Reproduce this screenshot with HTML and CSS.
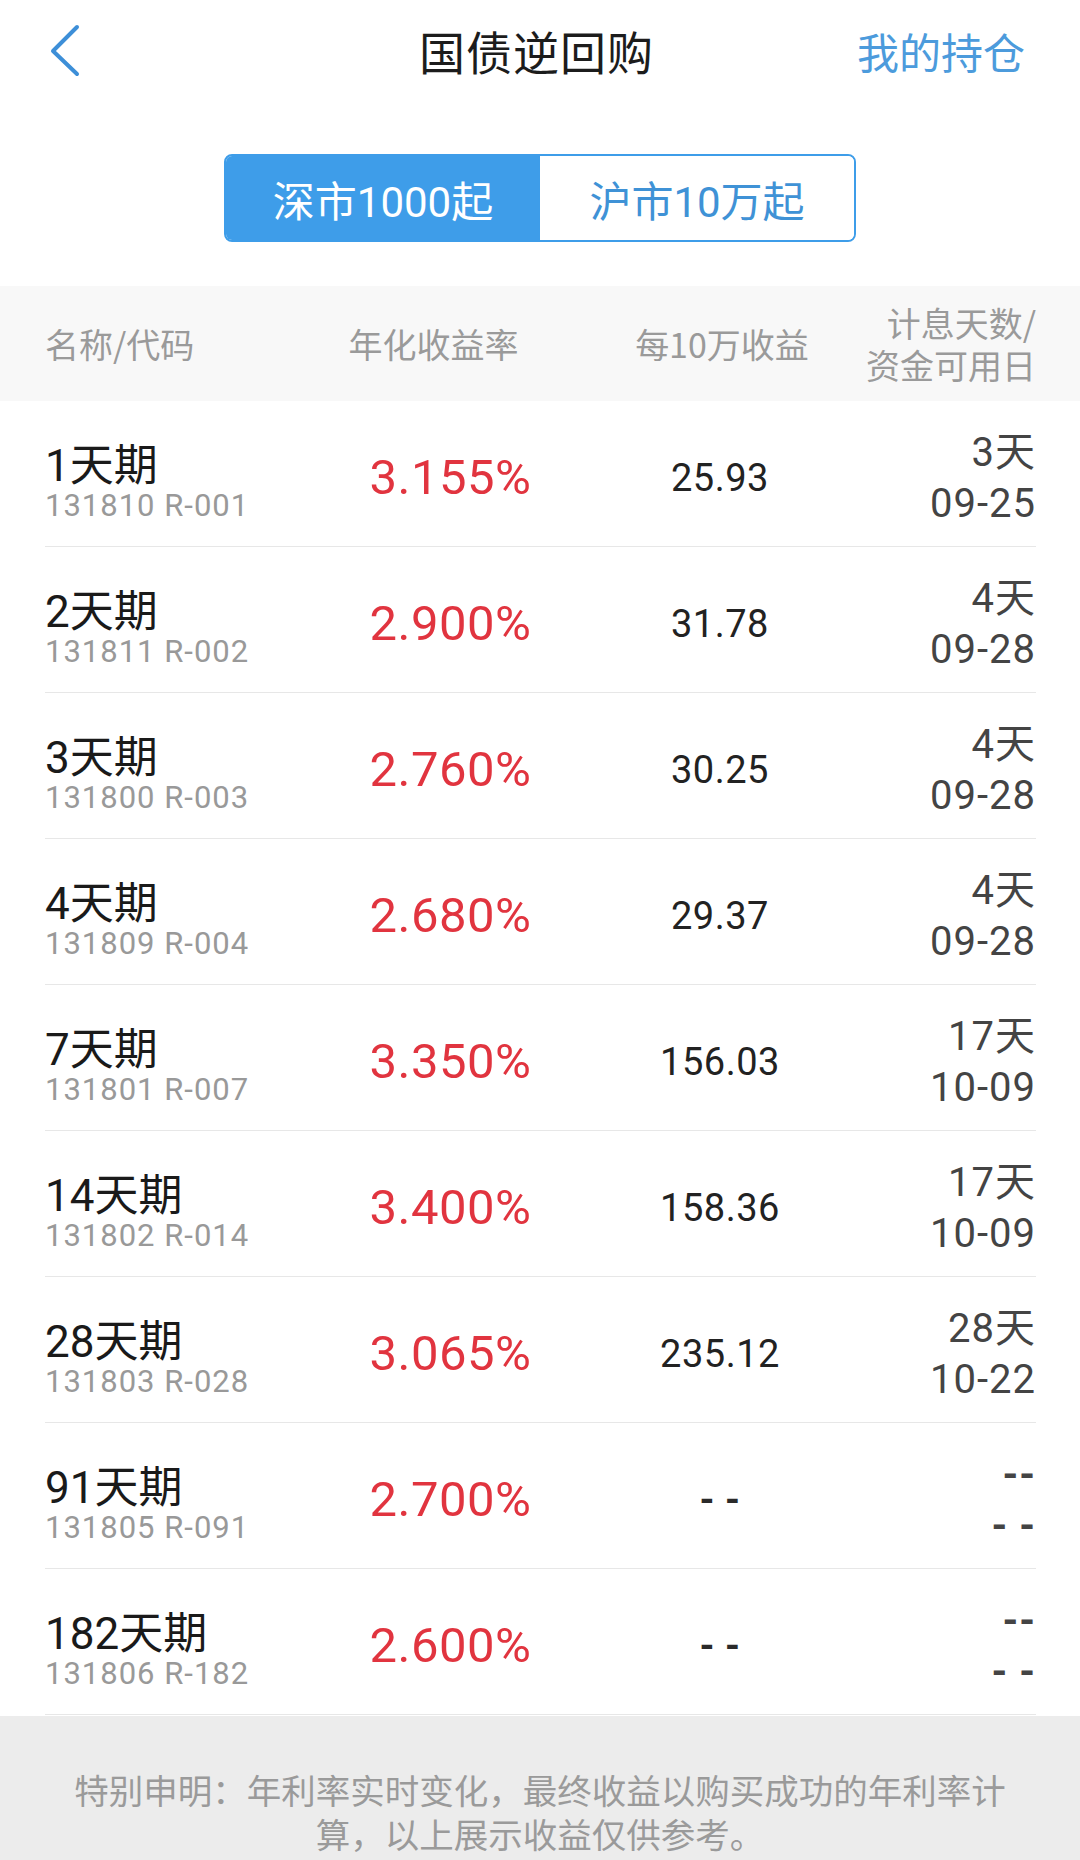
FILE: index.html
```html
<!DOCTYPE html>
<html lang="zh-CN">
<head>
<meta charset="utf-8">
<title>国债逆回购</title>
<link rel="stylesheet" href="styles.css">
</head>
<body>
<div class="page">
  <header class="nav">
    <div class="nav-left">
      <svg class="back" width="34" height="54" viewBox="0 0 34 54"><polyline points="29,4 5,28 29,51" fill="none" stroke="#3d8fd8" stroke-width="4" stroke-linecap="round" stroke-linejoin="round"/></svg>
    </div>
    <div class="nav-title">国债逆回购</div>
    <div class="nav-right">我的持仓</div>
  </header>

  <div class="seg-wrap">
    <div class="seg">
      <div class="seg-item active">深市1000起</div>
      <div class="seg-item">沪市10万起</div>
    </div>
  </div>

  <div class="thead">
    <div class="c1">名称/代码</div>
    <div class="c2 h2">年化收益率</div>
    <div class="c3">每10万收益</div>
    <div class="c4"><div>计息天数/</div><div>资金可用日</div></div>
  </div>

  <div class="rows">
    <div class="row">
      <div class="c1"><div class="name">1天期</div><div class="code">131810 R-001</div></div>
      <div class="c2 rate">3.155%</div>
      <div class="c3 val">25.93</div>
      <div class="c4 days"><div>3天</div><div>09-25</div></div>
    </div>
    <div class="row">
      <div class="c1"><div class="name">2天期</div><div class="code">131811 R-002</div></div>
      <div class="c2 rate">2.900%</div>
      <div class="c3 val">31.78</div>
      <div class="c4 days"><div>4天</div><div>09-28</div></div>
    </div>
    <div class="row">
      <div class="c1"><div class="name">3天期</div><div class="code">131800 R-003</div></div>
      <div class="c2 rate">2.760%</div>
      <div class="c3 val">30.25</div>
      <div class="c4 days"><div>4天</div><div>09-28</div></div>
    </div>
    <div class="row">
      <div class="c1"><div class="name">4天期</div><div class="code">131809 R-004</div></div>
      <div class="c2 rate">2.680%</div>
      <div class="c3 val">29.37</div>
      <div class="c4 days"><div>4天</div><div>09-28</div></div>
    </div>
    <div class="row">
      <div class="c1"><div class="name">7天期</div><div class="code">131801 R-007</div></div>
      <div class="c2 rate">3.350%</div>
      <div class="c3 val">156.03</div>
      <div class="c4 days"><div>17天</div><div>10-09</div></div>
    </div>
    <div class="row">
      <div class="c1"><div class="name">14天期</div><div class="code">131802 R-014</div></div>
      <div class="c2 rate">3.400%</div>
      <div class="c3 val">158.36</div>
      <div class="c4 days"><div>17天</div><div>10-09</div></div>
    </div>
    <div class="row">
      <div class="c1"><div class="name">28天期</div><div class="code">131803 R-028</div></div>
      <div class="c2 rate">3.065%</div>
      <div class="c3 val">235.12</div>
      <div class="c4 days"><div>28天</div><div>10-22</div></div>
    </div>
    <div class="row">
      <div class="c1"><div class="name">91天期</div><div class="code">131805 R-091</div></div>
      <div class="c2 rate">2.700%</div>
      <div class="c3 val dash">- -</div>
      <div class="c4 days dash"><div>--</div><div>- -</div></div>
    </div>
    <div class="row">
      <div class="c1"><div class="name">182天期</div><div class="code">131806 R-182</div></div>
      <div class="c2 rate">2.600%</div>
      <div class="c3 val dash">- -</div>
      <div class="c4 days dash"><div>--</div><div>- -</div></div>
    </div>
  </div>

  <footer class="note">特别申明：年利率实时变化，最终收益以购买成功的年利率计算，以上展示收益仅供参考。</footer>
</div>
</body>
</html>
```

FILE: styles.css
```css
* { box-sizing: border-box; }
html, body { margin: 0; padding: 0; background: #ffffff; }
body {
  width: 1080px;
  font-family: Roboto, "Noto Sans CJK SC", sans-serif;
  color: #222;
}
.page { width: 1080px; min-height: 1860px; display: flex; flex-direction: column; }

.nav {
  height: 100px;
  display: grid;
  grid-template-columns: 1fr auto 1fr;
  align-items: center;
  padding: 0 55px 0 48px;
}
.nav-left { display: flex; align-items: center; }
.back { display: block; }
.nav-title {
  font-family: "Noto Sans CJK SC", sans-serif;
  font-size: 46px;
  color: #1c1c1c;
  letter-spacing: 1px;
}
.nav-right {
  justify-self: end;
  font-family: "Noto Sans CJK SC", sans-serif;
  font-size: 42px;
  color: #4c9bdc;
}

.seg-wrap { display: flex; justify-content: center; padding-top: 54px; }
.seg {
  width: 632px;
  height: 88px;
  display: flex;
  border: 2px solid #3e9de9;
  border-radius: 8px;
  overflow: hidden;
}
.seg-item {
  flex: 1;
  display: flex;
  align-items: center;
  justify-content: center;
  font-size: 42px;
  color: #3f92d6;
  background: #fff;
}
.seg-item.active { background: #3e9de9; color: #ffffff; }

.thead, .row {
  display: grid;
  grid-template-columns: 275px 255px 290px 171px;
}
.c2, .c3 { text-align: center; }
.c4 { text-align: right; white-space: nowrap; }

.thead {
  margin-top: 44px;
  height: 115px;
  background: #f8f8f8;
  padding: 0 44px 0 45px;
  align-items: center;
  font-family: "Noto Sans CJK SC", sans-serif;
  font-size: 34px;
  line-height: 42px;
  color: #9a9a9a;
}
.thead .h2 { padding-right: 28px; }
.thead .c3 { padding-left: 4px; }

.rows { padding: 0 44px 0 45px; }
.row {
  height: 146px;
  padding-top: 8px;
  border-bottom: 1px solid #e7e7e7;
  align-items: center;
}
.row .c1 { align-self: start; margin-top: 35px; }
.name {
  font-size: 44px;
  line-height: 44px;
  color: #1a1a1a;
}
.code {
  font-size: 31px;
  line-height: 36px;
  color: #999999;
  letter-spacing: 1px;
}
.rate {
  font-size: 49px;
  color: #e1343f;
  letter-spacing: 0.5px;
  padding-left: 6px;
}
.val {
  font-size: 38px;
  color: #222;
  letter-spacing: 0.5px;
}
.days {
  font-size: 40px;
  line-height: 51px;
  color: #444;
  letter-spacing: 1px;
}
.dash { font-weight: 700; color: #2a2a2a; }
.days.dash { color: #444; }

.note {
  flex: 1;
  margin-top: 1px;
  background: #ececec;
  padding: 51px 68px 0;
  text-align: center;
  font-family: "Noto Sans CJK SC", sans-serif;
  font-size: 34.5px;
  line-height: 44px;
  color: #9a9a9a;
}
```
